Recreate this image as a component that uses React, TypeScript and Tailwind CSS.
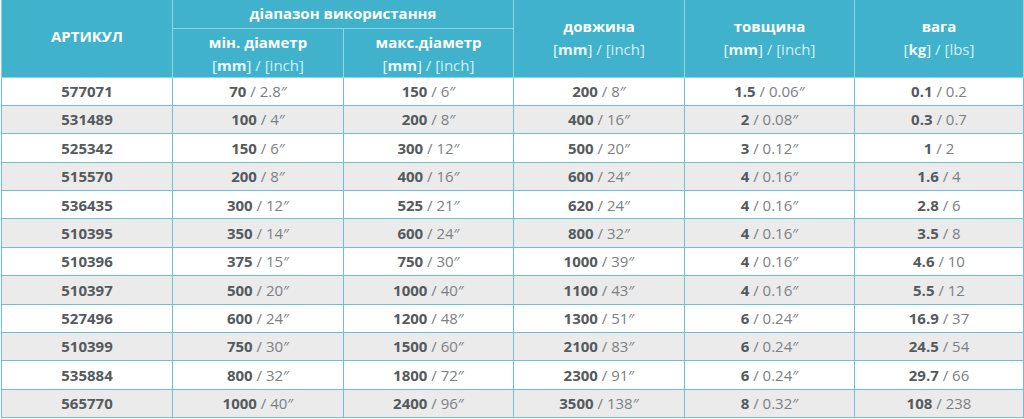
import React from "react";

const rows: [string, string, string, string, string, string, string, string, string, string, string][] = [
  ["577071", "70", "2.8″", "150", "6″", "200", "8″", "1.5", "0.06″", "0.1", "0.2"],
  ["531489", "100", "4″", "200", "8″", "400", "16″", "2", "0.08″", "0.3", "0.7"],
  ["525342", "150", "6″", "300", "12″", "500", "20″", "3", "0.12″", "1", "2"],
  ["515570", "200", "8″", "400", "16″", "600", "24″", "4", "0.16″", "1.6", "4"],
  ["536435", "300", "12″", "525", "21″", "620", "24″", "4", "0.16″", "2.8", "6"],
  ["510395", "350", "14″", "600", "24″", "800", "32″", "4", "0.16″", "3.5", "8"],
  ["510396", "375", "15″", "750", "30″", "1000", "39″", "4", "0.16″", "4.6", "10"],
  ["510397", "500", "20″", "1000", "40″", "1100", "43″", "4", "0.16″", "5.5", "12"],
  ["527496", "600", "24″", "1200", "48″", "1300", "51″", "6", "0.24″", "16.9", "37"],
  ["510399", "750", "30″", "1500", "60″", "2100", "83″", "6", "0.24″", "24.5", "54"],
  ["535884", "800", "32″", "1800", "72″", "2300", "91″", "6", "0.24″", "29.7", "66"],
  ["565770", "1000", "40″", "2400", "96″", "3500", "138″", "8", "0.32″", "108", "238"],
];

function Val({ b, r }: { b: string; r: string }) {
  return (
    <span>
      <span className="font-bold text-[#555a5c]">{b}</span>
      <span className="font-normal text-[#7b8083]"> / {r}</span>
    </span>
  );
}

function Units({ a, b }: { a: string; b: string }) {
  return (
    <div className="text-[15px] leading-[20px] mt-[3px] font-normal">
      <span className="text-[#eaf8fb]">[</span>
      <span className="font-bold text-[#eaf8fb]">{a}</span>
      <span className="text-[#eaf8fb]">]</span>
      <span className="text-[#d4f0f6]"> / [{b}]</span>
    </div>
  );
}

export default function App() {
  const th = "border border-[#8fd6e4] bg-[#40b2cb] text-white font-bold text-[15px] text-center align-middle p-0";
  const td = "border border-[#6cc2d2] text-center text-[15px] p-0";
  return (
    <div className="w-[1024px] h-[419px] bg-white overflow-hidden" style={{ fontFamily: '"Open Sans", "Noto Sans", sans-serif' }}>
      <table className="w-[1022px] ml-[1px] border-collapse table-fixed">
        <colgroup>
          <col className="w-[171px]" />
          <col className="w-[171px]" />
          <col className="w-[170px]" />
          <col className="w-[171px]" />
          <col className="w-[170px]" />
          <col className="w-[169px]" />
        </colgroup>
        <thead>
          <tr className="h-[28px]">
            <th rowSpan={2} className={th + " border-t-0"}>
              <div className="leading-[20px] -mt-[4px]">АРТИКУЛ</div>
            </th>
            <th colSpan={2} className={th + " border-t-0"}>
              <div className="leading-[20px] -mt-[1px]">діапазон використання</div>
            </th>
            <th rowSpan={2} className={th + " border-t-0"}>
              <div className="leading-[20px] -mt-[2px]">довжина</div>
              <Units a="mm" b="inch" />
            </th>
            <th rowSpan={2} className={th + " border-t-0"}>
              <div className="leading-[20px] -mt-[2px]">товщина</div>
              <Units a="mm" b="inch" />
            </th>
            <th rowSpan={2} className={th + " border-t-0"}>
              <div className="leading-[20px] -mt-[2px]">вага</div>
              <Units a="kg" b="lbs" />
            </th>
          </tr>
          <tr className="h-[49px]">
            <th className={th}>
              <div className="leading-[20px] mt-[1px]">мін. діаметр</div>
              <Units a="mm" b="inch" />
            </th>
            <th className={th}>
              <div className="leading-[20px] mt-[1px]">макс.діаметр</div>
              <Units a="mm" b="inch" />
            </th>
          </tr>
        </thead>
        <tbody>
          {rows.map((r, i) => (
            <tr key={r[0]} className={"h-[28.4px] " + (i % 2 === 0 ? "bg-white" : "bg-[#ebebec]")}>
              <td className={td + " font-bold text-[#555a5c]"}>{r[0]}</td>
              <td className={td}><Val b={r[1]} r={r[2]} /></td>
              <td className={td}><Val b={r[3]} r={r[4]} /></td>
              <td className={td}><Val b={r[5]} r={r[6]} /></td>
              <td className={td}><Val b={r[7]} r={r[8]} /></td>
              <td className={td}><Val b={r[9]} r={r[10]} /></td>
            </tr>
          ))}
        </tbody>
      </table>
    </div>
  );
}
